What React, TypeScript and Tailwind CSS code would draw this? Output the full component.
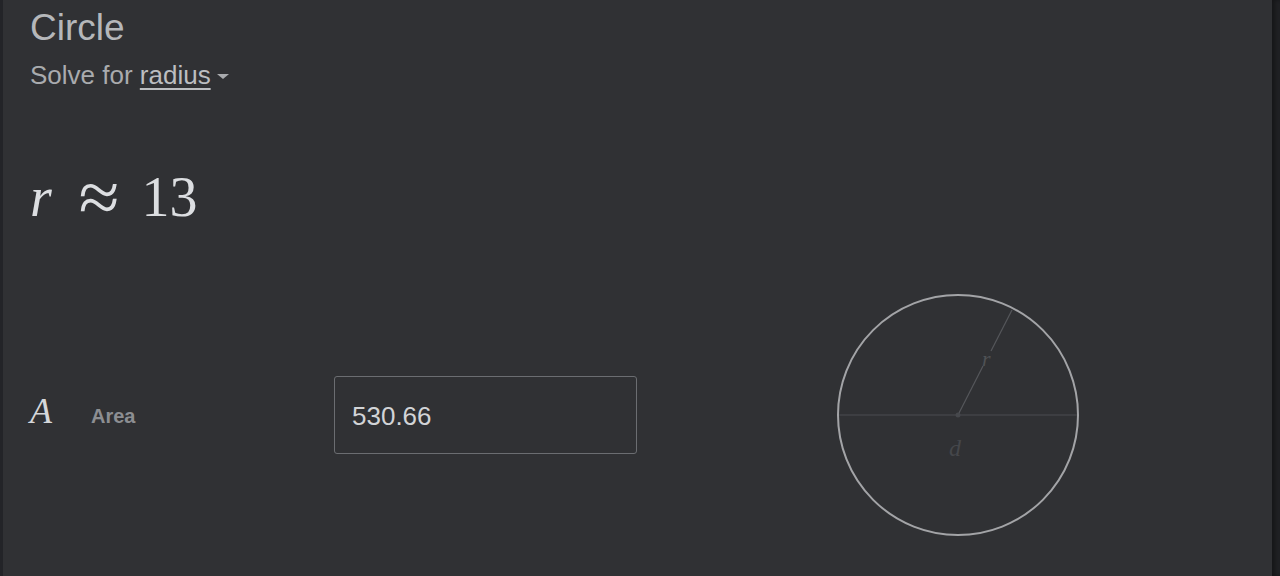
import React from 'react';

function CircleDiagram() {
  // centre (122,122), radius 120
  return (
    <svg width="244" height="244" viewBox="0 0 244 244" className="shrink-0">
      <line x1="2" y1="122" x2="242" y2="122" stroke="#4a4c50" strokeWidth="1" />
      {/* radius, broken around the label */}
      <line x1="122" y1="122" x2="147" y2="73" stroke="#55575b" strokeWidth="1.2" />
      <line x1="155" y1="58" x2="176" y2="17" stroke="#55575b" strokeWidth="1.2" />
      <circle cx="122" cy="122" r="2.5" fill="#46484c" />
      <text x="146" y="73" fill="#4f5155" fontSize="22" fontStyle="italic" fontFamily="'Liberation Serif', serif">r</text>
      <text x="113" y="163" fill="#45474b" fontSize="24" fontStyle="italic" fontFamily="'Liberation Serif', serif">d</text>
      <circle cx="122" cy="122" r="120" fill="none" stroke="#a3a4a7" strokeWidth="2" />
    </svg>
  );
}

export default function App() {
  return (
    <div className="flex w-[1280px] h-[576px] bg-[#202124] overflow-hidden">
      <div className="w-[3px] shrink-0 bg-[#232428]" />
      <div className="flex-1 bg-[#303134] pl-[27px] pt-[7px] font-['Liberation_Sans',Arial,sans-serif]">
        <div className="text-[37px] leading-[42px] text-[#b5b7ba]">Circle</div>
        <div className="mt-[11px] flex items-center text-[26px] leading-[30px] text-[#a9abae]">
          <span>Solve for&nbsp;</span>
          <span className="underline underline-offset-[4px] decoration-[2px] text-[#bcbec1]">radius</span>
          <span className="ml-[6px] mt-[2px] w-0 h-0 border-l-[6px] border-r-[6px] border-t-[5px] border-l-transparent border-r-transparent border-t-[#a9abae]" />
        </div>

        <div className="mt-[75px] flex items-baseline h-[64px] text-[56px] leading-[64px] text-[#dcdee1] font-['Liberation_Serif',serif]">
          <span className="italic">r</span>
          <span className="ml-[27px] relative top-[6px] text-[74px] leading-[52px]">≈</span>
          <span className="ml-[22px]">13</span>
        </div>

        <div className="mt-[64px] flex items-center">
          <div className="w-[61px] shrink-0 -mt-[8px] text-[36px] leading-[44px] italic text-[#d5d7da] font-['Liberation_Serif',serif]">
            A
          </div>
          <div className="w-[243px] shrink-0 pt-[2px] text-[20px] leading-[24px] font-bold text-[#8c8e92]">Area</div>
          <div className="w-[303px] h-[78px] shrink-0 flex items-center px-[17px] pt-[3px] border border-[#6b6d71] rounded-[3px] text-[26px] text-[#d2d4d7]">
            530.66
          </div>
          <div className="ml-[199px]">
            <CircleDiagram />
          </div>
        </div>
      </div>
      <div className="w-[8px] shrink-0 bg-[#202124] shadow-[inset_3px_0_4px_rgba(0,0,0,0.35)]" />
    </div>
  );
}
